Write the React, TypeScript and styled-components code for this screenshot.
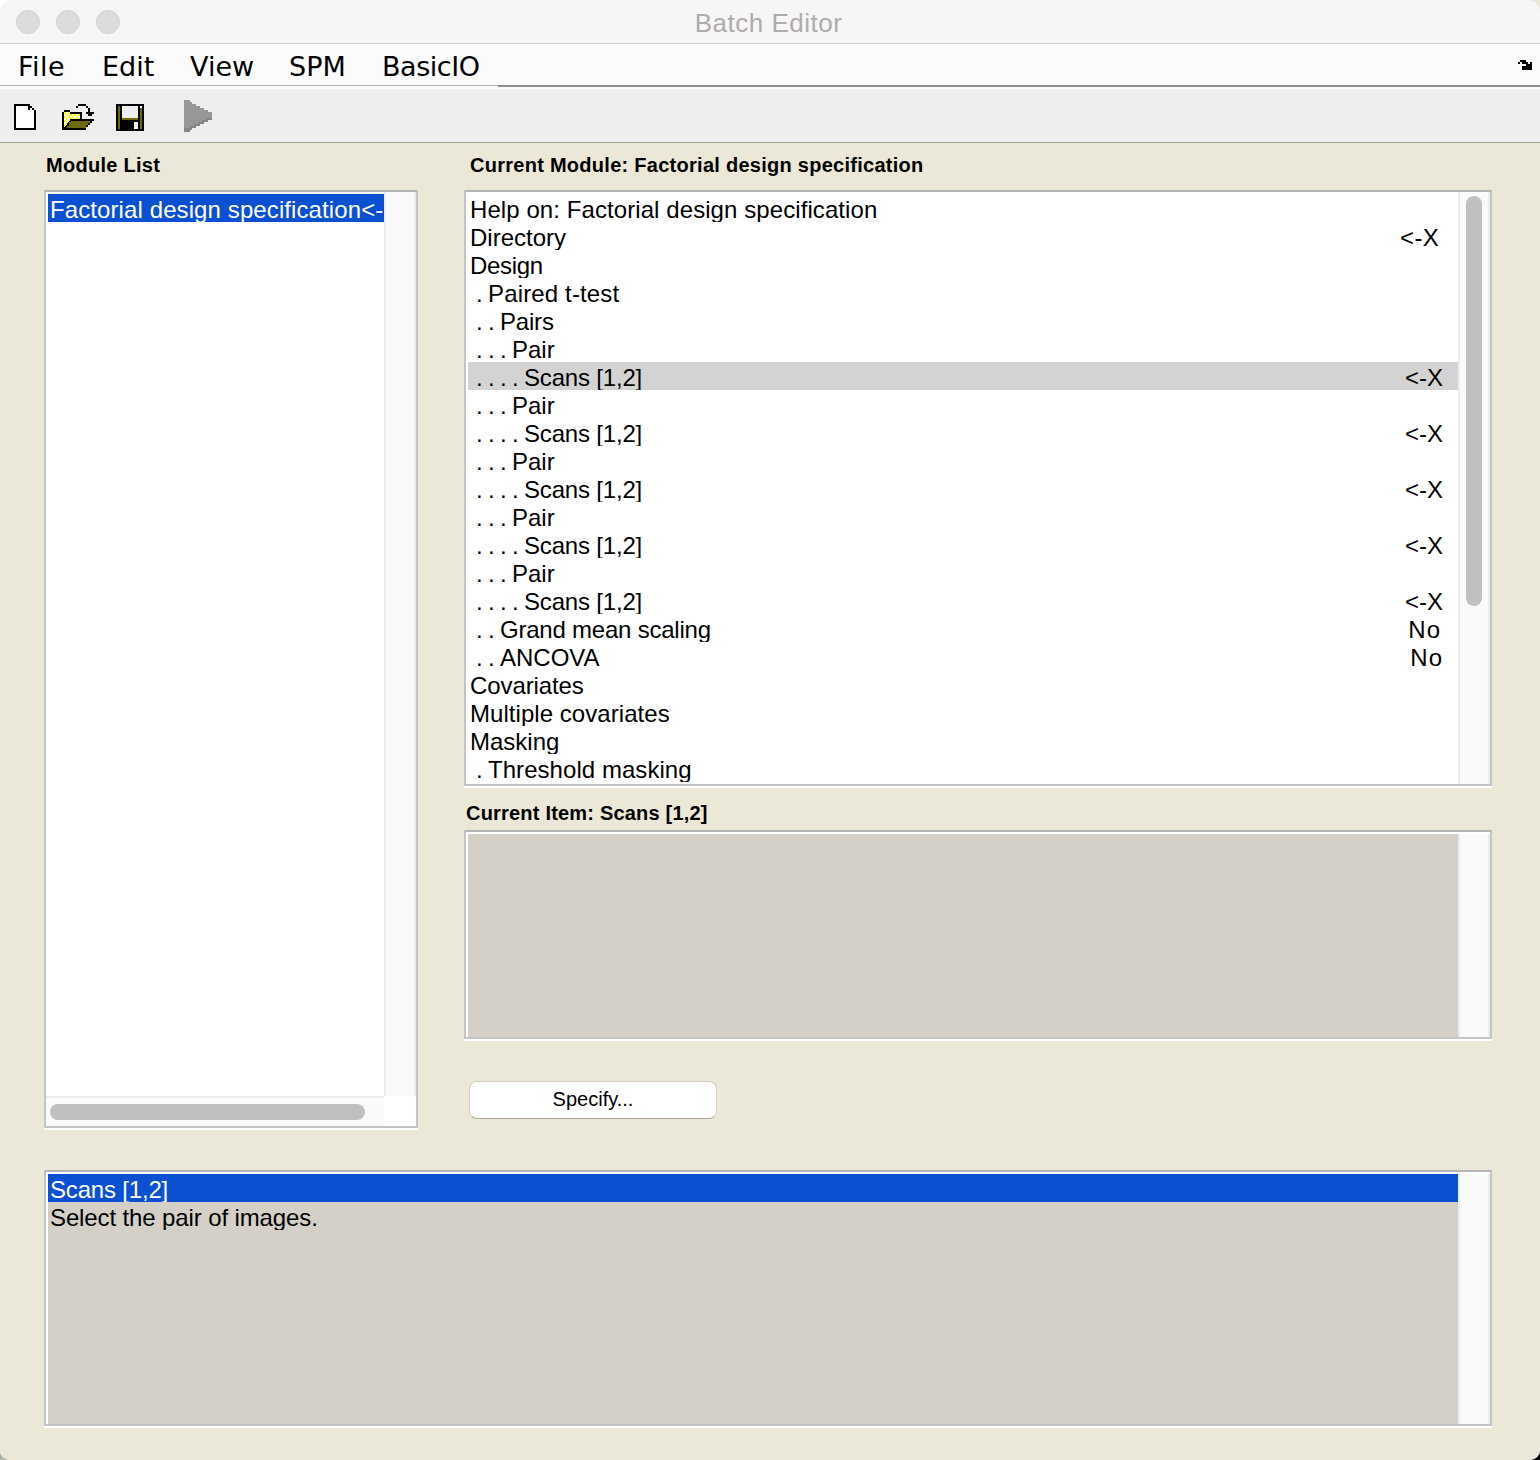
import React from 'react';
import styled, { createGlobalStyle } from 'styled-components';

const GlobalStyle = createGlobalStyle`
  html, body {
    margin: 0;
    padding: 0;
    background: linear-gradient(to right, #b5b5b5 50%, #000 50%);
  }
`;

type ModuleRow = {
  label: string;
  depth?: number;
  value?: string;
  inset?: number;
  valueTrack?: number;
  track?: number;
  selected?: boolean;
};

const scans = { label: 'Scans [1,2]', depth: 4, value: '<-X', inset: 15, track: -0.18 };
const pair = { label: 'Pair', depth: 3 };

const moduleRows: ModuleRow[] = [
  { label: 'Help on: Factorial design specification', track: 0.08 },
  { label: 'Directory', value: '<-X', inset: 19, valueTrack: 0.3 },
  { label: 'Design', track: -0.3 },
  { label: 'Paired t-test', depth: 1, track: 0.15 },
  { label: 'Pairs', depth: 2, track: -0.2 },
  pair,
  { ...scans, selected: true },
  pair,
  scans,
  pair,
  scans,
  pair,
  scans,
  pair,
  scans,
  { label: 'Grand mean scaling', depth: 2, value: 'No', inset: 17, valueTrack: 1, track: -0.22 },
  { label: 'ANCOVA', depth: 2, value: 'No', inset: 15, valueTrack: 1 },
  { label: 'Covariates', track: -0.1 },
  { label: 'Multiple covariates', track: 0.05 },
  { label: 'Masking' },
  { label: 'Threshold masking', depth: 1, track: 0.05 },
];

// old MATLAB toolbar icons, drawn on their 2px grid
const NewIcon = () => (
  <svg width="22" height="26" viewBox="0 0 22 26" shapeRendering="crispEdges">
    <path d="M0 0H16V2H18V4H20V6H22V26H0Z" fill="#000" />
    <path d="M2 2H14V6H20V24H2Z" fill="#fff" />
    <path d="M16 4H18V6H16Z" fill="#fff" />
  </svg>
);

const OpenIcon = () => (
  <svg width="32" height="26" viewBox="0 0 32 26" shapeRendering="crispEdges">
    <defs>
      <pattern id="folderCheck" width="4" height="4" patternUnits="userSpaceOnUse">
        <rect width="4" height="4" fill="#ffff00" />
        <rect width="2" height="2" fill="#fff" />
        <rect x="2" y="2" width="2" height="2" fill="#fff" />
      </pattern>
    </defs>
    <path d="M0 8H2V6H8V8H20V16H8V18H6V22H4V26H0Z" fill="#000" />
    <path d="M2 8H8V10H18V16H8L2 24Z" fill="url(#folderCheck)" />
    <path d="M8 15H32V17H30V19H28V21H26V23H24V26H2V24H4V22H6V18H8Z" fill="#000" />
    <path d="M9 17H28V19H26V21H24V24H5V22H7V18H9Z" fill="#6f6a00" />
    <path d="M14 2H16V0H24V2H26V4H28V8H32V10H30V12H26V10H24V8H26V4H24V2H16V4H14Z" fill="#000" />
  </svg>
);

const SaveIcon = () => (
  <svg width="28" height="27" viewBox="0 0 28 27" shapeRendering="crispEdges">
    <rect width="28" height="27" fill="#000" />
    <rect x="2" y="2" width="24" height="23" fill="#6f6a00" />
    <rect x="6" y="2" width="16" height="12" fill="#efeeee" />
    <rect x="24" y="2" width="2" height="2" fill="#fff" />
    <rect x="4" y="16" width="20" height="11" fill="#000" />
    <rect x="18" y="18" width="4" height="7" fill="#fff" />
    <rect x="4" y="2" width="2" height="14" fill="#000" />
    <rect x="22" y="2" width="2" height="14" fill="#000" />
  </svg>
);

const RunIcon = () => (
  <svg width="28" height="32" viewBox="0 0 28 32" shapeRendering="crispEdges">
    <path d="M0 0H6V2H8V4H12V6H16V8H20V10H24V12H28V20H24V22H20V24H16V26H12V28H8V30H6V32H0Z" fill="#979797" />
    <path d="M0 28H6V26H10V24H14V22H18V20H22V18H28V20H24V22H20V24H16V26H12V28H8V30H6V32H0Z" fill="#858585" />
  </svg>
);

const ExpandIcon = () => (
  <svg width="14" height="10" viewBox="0 0 14 10" shapeRendering="crispEdges">
    <path d="M2 0H8V2H10V4H12V2H14V10H4V6H8V4H4V2H2V4H0V2H2Z" fill="#000" />
  </svg>
);

const App = () => {
  return (
    <>
      <GlobalStyle />
      <Window>
        <TitleBar>
          <Lights>
            <Light />
            <Light />
            <Light />
          </Lights>
          <Title>Batch Editor</Title>
        </TitleBar>
        <MenuBar>
          <MenuItem $width={84} $track={0.5}>File</MenuItem>
          <MenuItem $width={88}>Edit</MenuItem>
          <MenuItem $width={99}>View</MenuItem>
          <MenuItem $width={93}>SPM</MenuItem>
          <MenuItem $width={134} $track={-0.45}>BasicIO</MenuItem>
          <MenuFill>
            <ExpandIcon />
          </MenuFill>
        </MenuBar>
        <ToolBar>
          <ToolButton $left={14}>
            <NewIcon />
          </ToolButton>
          <ToolButton $left={26}>
            <OpenIcon />
          </ToolButton>
          <ToolButton $left={22}>
            <SaveIcon />
          </ToolButton>
          <ToolButton $left={40} $lift={4}>
            <RunIcon />
          </ToolButton>
        </ToolBar>
        <Content>
          <TopArea>
            <ModuleColumn>
              <SectionLabel $indent={2}>Module List</SectionLabel>
              <ModulePanel>
                <ModuleBody>
                  <ModuleList>
                    <Row $tone="blue">
                      <RowLabel $track={0.1}>Factorial design specification&lt;-</RowLabel>
                    </Row>
                  </ModuleList>
                  <VerticalTrack />
                </ModuleBody>
                <HorizontalTrack>
                  <HorizontalThumb />
                </HorizontalTrack>
              </ModulePanel>
            </ModuleColumn>
            <DetailColumn>
              <SectionLabel $indent={6}>Current Module: Factorial design specification</SectionLabel>
              <ListPanel>
                <ListBody>
                  {moduleRows.map((row, i) => (
                    <Row key={i} $tone={row.selected ? 'gray' : undefined}>
                      <RowLabel $track={row.track}>
                        {row.depth ? <Indent>{' .'.repeat(row.depth) + ' '}</Indent> : null}
                        {row.label}
                      </RowLabel>
                      {row.value && (
                        <RowValue $inset={row.inset} $track={row.valueTrack}>
                          {row.value}
                        </RowValue>
                      )}
                    </Row>
                  ))}
                </ListBody>
                <VerticalTrack>
                  <VerticalThumb />
                </VerticalTrack>
              </ListPanel>
              <ItemLabel>Current Item: Scans [1,2]</ItemLabel>
              <ItemPanel>
                <GreyBody />
                <VerticalTrack />
              </ItemPanel>
              <SpecifyButton>Specify...</SpecifyButton>
            </DetailColumn>
          </TopArea>
          <HelpPanel>
            <GreyBody>
              <Row $tone="blue">
                <RowLabel $track={-0.18}>Scans [1,2]</RowLabel>
              </Row>
              <Row>
                <RowLabel $track={-0.12}>Select the pair of images.</RowLabel>
              </Row>
            </GreyBody>
            <VerticalTrack />
          </HelpPanel>
        </Content>
      </Window>
    </>
  );
};

const Window = styled.div`
  display: flex;
  flex-direction: column;
  width: 1540px;
  height: 1460px;
  overflow: hidden;
  border-radius: 0 0 10px 10px;
  background: linear-gradient(to right, #fff 50%, #ebe8d8 50%);
  font-family: "Liberation Sans", Arial, sans-serif;
  color: #000;
`;

const TitleBar = styled.div`
  position: relative;
  flex: none;
  height: 43px;
  background: #f6f6f6;
  border-bottom: 1px solid #cfcfcf;
  border-radius: 12px 12px 0 0;
`;

const Lights = styled.div`
  display: flex;
  gap: 16px;
  padding: 10px 0 0 16px;
`;

const Light = styled.span`
  width: 24px;
  height: 24px;
  box-sizing: border-box;
  border-radius: 50%;
  background: #dcdcdc;
  border: 1px solid #d2d2d2;
`;

const Title = styled.div`
  position: absolute;
  top: 0;
  left: 0;
  right: 3px;
  text-align: center;
  line-height: 46px;
  font-size: 26px;
  letter-spacing: 0.5px;
  color: #b0abab;
`;

const MenuBar = styled.div`
  display: flex;
  flex: none;
  height: 42px;
  box-sizing: border-box;
  background: #fbfbfb;
  border-bottom: 1px solid #b4b4b4;
  font-family: "DejaVu Sans", sans-serif;
  font-size: 27px;
`;

const MenuItem = styled.div<{ $width: number; $track?: number }>`
  width: ${(p) => p.$width}px;
  padding-left: 18px;
  box-sizing: border-box;
  line-height: 45px;
  letter-spacing: ${(p) => p.$track ?? 0}px;
`;

const MenuFill = styled.div`
  position: relative;
  z-index: 1;
  flex: 1;
  display: flex;
  justify-content: flex-end;
  align-items: flex-start;
  height: 43px;
  box-sizing: border-box;
  padding: 16px 8px 0 0;
  border-bottom: 2px solid #8d8d8d;
`;

const ToolBar = styled.div`
  display: flex;
  flex: none;
  align-items: flex-start;
  height: 57px;
  box-sizing: border-box;
  padding-top: 15px;
  background: #eeeeee;
  border-top: 3px solid #fbfbfb;
  border-bottom: 1px solid #9f9f9f;
  box-shadow: 0 2px 0 #f5f4ec;
`;

const ToolButton = styled.div<{ $left: number; $lift?: number }>`
  display: flex;
  margin-left: ${(p) => p.$left}px;
  margin-top: ${(p) => -(p.$lift ?? 0)}px;
`;

const Content = styled.div`
  display: flex;
  flex: 1;
  flex-direction: column;
  gap: 42px;
  padding: 10px 48px 0 44px;
  background: #ebe8d8;
`;

const TopArea = styled.div`
  display: flex;
  gap: 46px;
`;

const ModuleColumn = styled.div`
  width: 374px;
  flex: none;
`;

const DetailColumn = styled.div`
  flex: 1;
  min-width: 0;
`;

const SectionLabel = styled.div<{ $indent: number }>`
  height: 37px;
  padding-left: ${(p) => p.$indent}px;
  font-size: 20px;
  font-weight: 700;
  line-height: 24px;
  letter-spacing: 0.27px;
`;

const ItemLabel = styled.div`
  height: 44px;
  padding: 15px 0 0 2px;
  box-sizing: border-box;
  font-size: 20px;
  font-weight: 700;
  line-height: 24px;
  letter-spacing: 0.2px;
`;

const Panel = styled.div`
  display: flex;
  box-sizing: border-box;
  border: 2px solid #c4c4c4;
  border-top-color: #b4b4b4;
  box-shadow: 0 2px 0 #fff;
  background: #fff;
`;

const ModulePanel = styled(Panel)`
  flex-direction: column;
  height: 938px;
`;

const ModuleBody = styled.div`
  display: flex;
  flex: 1;
  min-height: 0;
`;

const ModuleList = styled.div`
  flex: 1;
  min-width: 0;
  padding: 2px 0 0 2px;
`;

const ListPanel = styled(Panel)`
  height: 596px;
`;

const ListBody = styled.div`
  flex: 1;
  min-width: 0;
  padding: 2px 0 0 2px;
  overflow: hidden;
`;

const ItemPanel = styled(Panel)`
  height: 209px;
  padding-top: 2px;
`;

const HelpPanel = styled(Panel)`
  height: 256px;
  padding-top: 2px;
`;

const GreyBody = styled.div`
  flex: 1;
  min-width: 0;
  margin: 0 0 0 2px;
  background: #d4d0c8;
`;

const Row = styled.div<{ $tone?: 'blue' | 'gray' }>`
  display: flex;
  justify-content: space-between;
  height: 28px;
  overflow: hidden;
  background: ${(p) => (p.$tone === 'blue' ? '#0a50d0' : p.$tone === 'gray' ? '#d3d3d3' : 'transparent')};
  color: ${(p) => (p.$tone === 'blue' ? '#fff' : '#000')};
`;

const RowLabel = styled.span<{ $track?: number }>`
  padding-left: 2px;
  font-size: 24px;
  line-height: 32px;
  white-space: pre;
  letter-spacing: ${(p) => p.$track ?? 0}px;
`;

// the dots and spaces of the tree prefix are 6px wide each in the reference
const Indent = styled.span`
  letter-spacing: -0.67px;
`;

const RowValue = styled.span<{ $inset?: number; $track?: number }>`
  padding-right: ${(p) => p.$inset}px;
  font-size: 24px;
  line-height: 32px;
  letter-spacing: ${(p) => p.$track ?? 0}px;
`;

const VerticalTrack = styled.div`
  position: relative;
  flex: none;
  width: 32px;
  box-sizing: border-box;
  background: #fafafa;
  border-left: 2px solid #ececec;
  border-right: 2px solid #ececec;
`;

const VerticalThumb = styled.div`
  position: absolute;
  top: 4px;
  left: 6px;
  width: 16px;
  height: 410px;
  border-radius: 8px;
  background: #c0c0c0;
`;

const HorizontalTrack = styled.div`
  flex: none;
  height: 30px;
  margin-right: 32px;
  padding: 6px 0 0 4px;
  box-sizing: border-box;
  background: #fafafa;
  border-top: 2px solid #ececec;
`;

const HorizontalThumb = styled.div`
  width: 315px;
  height: 16px;
  border-radius: 8px;
  background: #c0c0c0;
`;

const SpecifyButton = styled.button`
  display: block;
  width: 248px;
  height: 38px;
  margin: 42px 0 0 5px;
  padding: 0 0 2px;
  border: 1px solid #d2cfc0;
  border-bottom-color: #a9a699;
  border-radius: 8px;
  background: #fff;
  color: #000;
  font-family: "Liberation Sans", Arial, sans-serif;
  font-size: 20px;
`;

export default App;
